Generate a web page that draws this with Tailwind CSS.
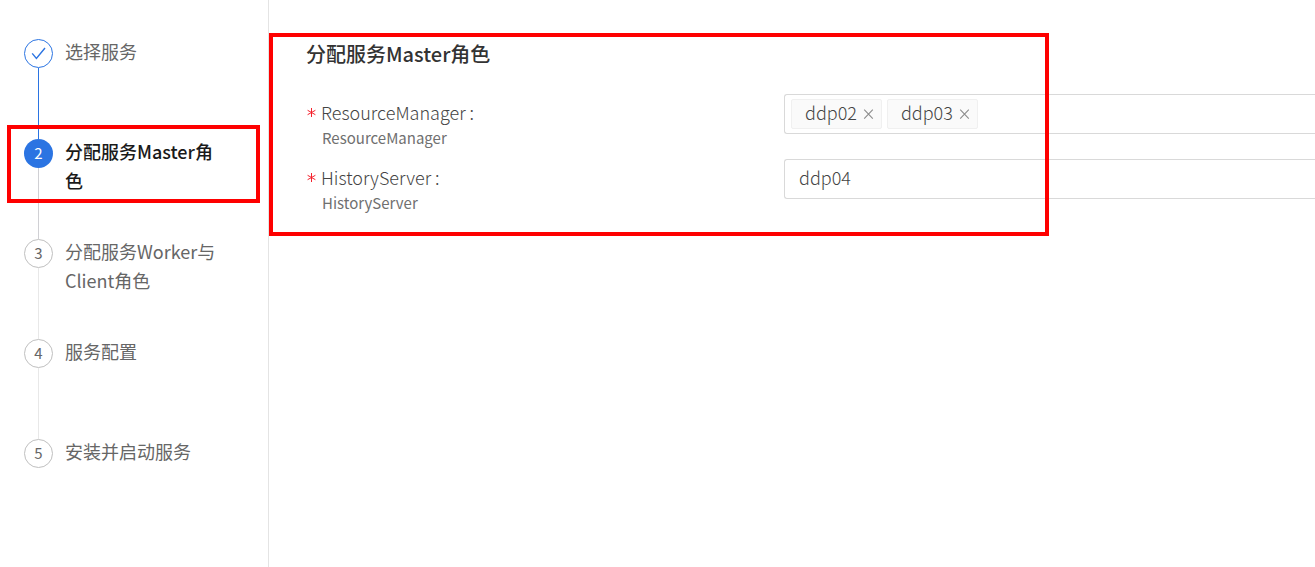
<!DOCTYPE html>
<html lang="zh-CN">
<head>
    <meta charset="UTF-8">
    <meta name="viewport" content="width=device-width, initial-scale=1.0">
    <title>分配服务Master角色</title>
    <script src="https://cdn.jsdelivr.net/npm/@tailwindcss/browser@4"></script>
</head>
<body class="bg-white font-['Noto_Sans_CJK_SC',sans-serif] text-lg text-[#666]">
    <div class="relative flex min-h-screen overflow-hidden">
        <!-- 步骤条 -->
        <aside class="w-[269px] shrink-0 border-r border-[#e4e4e4] pt-[39px] pl-6">
            <ol>
                <li class="flex h-[100px] gap-3">
                    <div class="flex w-[29px] shrink-0 flex-col items-center">
                        <span class="flex size-[29px] shrink-0 items-center justify-center rounded-full border border-[#2b74e2]">
                            <svg class="size-4" viewBox="0 0 16 16" fill="none" stroke="#2b74e2" stroke-width="1.4"><path d="M1.2 7.4 5.4 12.4 14 2"/></svg>
                        </span>
                        <span class="w-px flex-1 bg-[#2b74e2]"></span>
                    </div>
                    <p class="-mt-0.5 leading-[29px]">选择服务</p>
                </li>
                <li class="relative flex h-[100px] gap-3">
                    <div class="flex w-[29px] shrink-0 flex-col items-center">
                        <span class="flex size-[29px] shrink-0 items-center justify-center rounded-full bg-[#2b74e2] pb-0.5 text-[15px] text-white">2</span>
                        <span class="w-px flex-1 bg-[#d0d0d4]"></span>
                    </div>
                    <p class="-mt-0.5 w-[160px] leading-[29px] font-medium text-[#1a1a1a]">分配服务Master角色</p>
                    <div class="absolute -top-[14px] -left-[17px] h-[78px] w-[253px] border-4 border-[#fe0000]"></div>
                </li>
                <li class="flex h-[100px] gap-3">
                    <div class="flex w-[29px] shrink-0 flex-col items-center">
                        <span class="flex size-[29px] shrink-0 items-center justify-center rounded-full border border-[#bfbfbf] pb-0.5 text-[15px]">3</span>
                        <span class="w-px flex-1 bg-[#e8e8e8]"></span>
                    </div>
                    <p class="-mt-0.5 w-[160px] leading-[29px]">分配服务Worker与Client角色</p>
                </li>
                <li class="flex h-[100px] gap-3">
                    <div class="flex w-[29px] shrink-0 flex-col items-center">
                        <span class="flex size-[29px] shrink-0 items-center justify-center rounded-full border border-[#bfbfbf] pb-0.5 text-[15px]">4</span>
                        <span class="w-px flex-1 bg-[#e8e8e8]"></span>
                    </div>
                    <p class="-mt-0.5 leading-[29px]">服务配置</p>
                </li>
                <li class="flex gap-3">
                    <span class="flex size-[29px] shrink-0 items-center justify-center rounded-full border border-[#bfbfbf] pb-0.5 text-[15px]">5</span>
                    <p class="-mt-0.5 leading-[29px]">安装并启动服务</p>
                </li>
            </ol>
        </aside>

        <!-- 角色分配表单 -->
        <main class="relative flex-1 pt-[39px] pl-[37px]">
            <h1 class="text-xl leading-[29px] font-medium text-[#333]">分配服务Master角色</h1>
            <form class="mt-[26px] font-light text-[#444]">
                <div class="flex h-[65px]">
                    <div class="w-[478px] shrink-0">
                        <label for="resource-manager" class="flex h-9 items-center gap-1"><svg class="size-[11px]" viewBox="0 0 11 11" fill="none" stroke="#f5222d" aria-hidden="true"><path d="M5.5 1v9M1.6 3.3l7.8 4.4M9.4 3.3 1.6 7.7"/></svg><span>ResourceManager :</span></label>
                        <p class="-mt-0.5 pl-4 text-[15px] leading-5 font-normal text-[#707070]">ResourceManager</p>
                    </div>
                    <div class="flex h-10 flex-1 items-center gap-[5px] rounded-l-[3px] border border-r-0 border-[#d9d9d9] pl-[6px]">
                        <span class="flex h-[30px] items-center gap-[6px] rounded-[2px] border border-[#f0f0f0] bg-[#fafafa] pr-[7px] pl-[13px]"><span class="pb-1">ddp02</span>
                            <button type="button" aria-label="移除 ddp02"><svg class="size-[11px]" viewBox="0 0 11 11" stroke="#8c8c8c" stroke-width="1.1"><path d="M1.2 .6 9.8 9.6M9.8 .6 1.2 9.6"/></svg></button>
                        </span>
                        <span class="flex h-[30px] items-center gap-[6px] rounded-[2px] border border-[#f0f0f0] bg-[#fafafa] pr-[7px] pl-[13px]"><span class="pb-1">ddp03</span>
                            <button type="button" aria-label="移除 ddp03"><svg class="size-[11px]" viewBox="0 0 11 11" stroke="#8c8c8c" stroke-width="1.1"><path d="M1.2 .6 9.8 9.6M9.8 .6 1.2 9.6"/></svg></button>
                        </span>
                        <input id="resource-manager" type="text" class="min-w-0 flex-1 outline-none">
                    </div>
                </div>
                <div class="flex h-[65px]">
                    <div class="w-[478px] shrink-0">
                        <label for="history-server" class="flex h-9 items-center gap-1"><svg class="size-[11px]" viewBox="0 0 11 11" fill="none" stroke="#f5222d" aria-hidden="true"><path d="M5.5 1v9M1.6 3.3l7.8 4.4M9.4 3.3 1.6 7.7"/></svg><span>HistoryServer :</span></label>
                        <p class="-mt-0.5 pl-4 text-[15px] leading-5 font-normal text-[#707070]">HistoryServer</p>
                    </div>
                    <select id="history-server" class="h-10 min-w-0 flex-1 appearance-none rounded-l-[3px] border border-r-0 border-[#d9d9d9] bg-white pb-1 pl-[14px]">
                        <option>ddp04</option>
                    </select>
                </div>
            </form>
            <div class="pointer-events-none absolute top-[33px] left-0 h-[203px] w-[780px] border-4 border-[#fe0000]"></div>
        </main>
    </div>
</body>
</html>
